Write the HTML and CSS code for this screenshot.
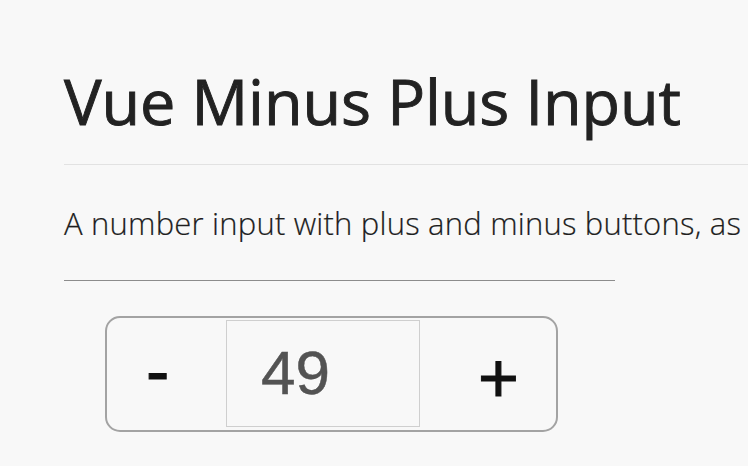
FILE: index.html
```html
<!DOCTYPE html>
<html lang="en">
<head>
<meta charset="utf-8">
<title>Vue Minus Plus Input</title>
<link rel="stylesheet" href="styles.css">
</head>
<body>
<main class="page">
  <h1 class="title">Vue Minus Plus Input</h1>
  <hr class="rule-wide">
  <p class="lead">A number input with plus and minus buttons, as</p>
  <hr class="rule-short">
  <div class="stepper">
    <button class="step step-minus" type="button">-</button>
    <div class="value">49</div>
    <button class="step step-plus" type="button">+</button>
  </div>
</main>
</body>
</html>
```
FILE: styles.css
```css
html, body {
  margin: 0;
  padding: 0;
  background: #f8f8f8;
  overflow: hidden;
}

.page {
  padding: 69px 0 0 64px;
  display: flex;
  flex-direction: column;
  align-items: flex-start;
  font-family: "Open Sans", "Noto Sans", sans-serif;
  color: #252525;
}

.title {
  margin: 0;
  font-size: 63px;
  font-weight: 400;
  letter-spacing: -0.1px;
  -webkit-text-stroke: 0.9px #222;
  line-height: 63px;
  white-space: nowrap;
  color: #222;
}

.rule-wide {
  align-self: stretch;
  margin: 32px 0 0 0;
  border: 0;
  height: 1px;
  background: #e2e2e2;
}

.lead {
  margin: 43px 0 0 0;
  font-size: 31px;
  font-weight: 350;
  letter-spacing: 0.2px;
  -webkit-text-stroke: 0.2px #1e1e1e;
  line-height: 31px;
  white-space: nowrap;
  color: #1e1e1e;
}

.rule-short {
  width: 551px;
  margin: 41px 0 0 0;
  border: 0;
  height: 1px;
  background: #8c8c8c;
}

.stepper {
  margin: 35px 0 0 41px;
  box-sizing: border-box;
  width: 453px;
  height: 116px;
  border: 2px solid #a3a3a3;
  border-radius: 15px;
  padding: 2px 0 3px 0;
  display: grid;
  grid-template-columns: 119px 194px 1fr;
  font-family: "Liberation Sans", Arial, sans-serif;
}

.step {
  margin: 0;
  border: 0;
  background: transparent;
  font-family: inherit;
  font-size: 70px;
  line-height: 1;
  color: #111;
  -webkit-text-stroke: 1px #111;
  text-align: left;
  display: flex;
  align-items: center;
  cursor: pointer;
}

.step-minus {
  padding: 0 0 6px 39px;
}

.step-plus {
  padding: 8px 0 0 58px;
}

.value {
  box-sizing: border-box;
  border: 1px solid #cfcfcf;
  display: flex;
  align-items: center;
  padding: 0 0 2px 34px;
  font-size: 62px;
  line-height: 1;
  color: #535353;
  -webkit-text-stroke: 0.5px #535353;
}
```
